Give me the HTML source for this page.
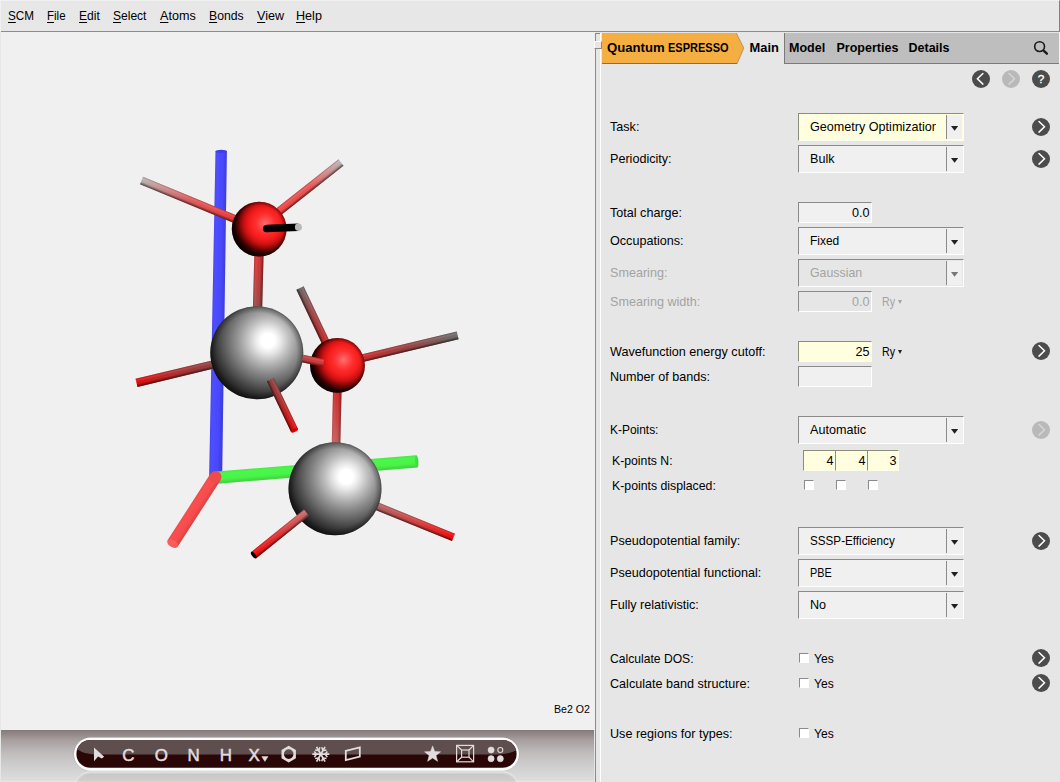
<!DOCTYPE html>
<html><head><meta charset="utf-8"><title>AMSinput</title>
<style>
*{box-sizing:border-box;margin:0;padding:0}
html,body{width:1060px;height:782px;overflow:hidden;background:#e6e6e6}
body{position:relative;font-family:"Liberation Sans",sans-serif;font-size:12.6px;color:#000}
#menubar{position:absolute;left:0;top:0;width:1060px;height:31px;background:#e7e7e7;border-top:1px solid #f1f1f1;border-left:1px solid #f1f1f1;border-right:1px solid #808080}
#menuline{position:absolute;left:1px;top:31px;width:1059px;height:1px;background:#8c8c8c}
#menubar>span{position:absolute;top:7px;margin-left:-1px;line-height:16px;white-space:nowrap}
#menubar u{text-decoration:underline;text-underline-offset:2px}
#view{position:absolute;left:1px;top:32px;width:594px;height:698px;background:#f0f0f0}
#bottom{position:absolute;left:1px;top:730px;width:593px;height:51px;background:linear-gradient(#857979 0,#a89f9f 20%,#c0bcbc 45%,#d0cfcf 72%,#dedede 100%)}
#sashd{position:absolute;left:595px;top:33px;width:1px;height:749px;background:#8a8a8a}
#sashw{position:absolute;left:600px;top:33px;width:1px;height:749px;background:#fff}
.lbl{position:absolute;white-space:nowrap;line-height:16px}
.dis{color:#a3a3a3}
.sunk{position:absolute;background:#f0f0f0;border:1px solid;border-color:#8a8a8a #fff #fff #8a8a8a}
.yel{background:#ffffe0;border-color:#8c8c78 #ffffea #ffffea #8c8c78}
.disbg{background:#e6e6e6}
.combo .t{position:absolute;left:11px;top:5px;line-height:16px;white-space:nowrap;overflow:hidden;width:126px}
.combo .sep{position:absolute;left:147px;top:1px;width:1px;height:24px;background:#8a8a8a}
.combo .btn{position:absolute;left:148px;top:1px;width:15px;height:24px;background:#f0f0f0}
.combo .arr{position:absolute;left:152px;top:12px;width:7.2px;height:4.8px;background:#222;clip-path:polygon(0 0,100% 0,50% 100%)}
.entry .t{position:absolute;right:1.5px;top:2px;line-height:16px;white-space:nowrap}
.circ{position:absolute;width:18px;height:18px}
.cb{position:absolute;width:10px;height:10px;background:#fff;border:1px solid;border-color:#8a8a8a #fff #fff #8a8a8a}
.tri{position:absolute;width:0;height:0;border-left:2px solid transparent;border-right:2px solid transparent;border-top:4px solid #222}
.tab{position:absolute;top:40px;line-height:16px;font-weight:bold;font-size:12.5px;white-space:nowrap}
.sx{display:inline-block;transform-origin:0 50%}
</style></head><body>
<div id="menubar">
<span style="left:8px"><span class="sx" style="transform:scaleX(0.93)"><u>S</u>CM</span></span>
<span style="left:47px"><span class="sx" style="transform:scaleX(0.915)"><u>F</u>ile</span></span>
<span style="left:79px"><span class="sx" style="transform:scaleX(0.96)"><u>E</u>dit</span></span>
<span style="left:113px"><span class="sx" style="transform:scaleX(0.956)"><u>S</u>elect</span></span>
<span style="left:160px"><u>A</u>toms</span>
<span style="left:209px"><span class="sx" style="transform:scaleX(0.97)"><u>B</u>onds</span></span>
<span style="left:257px"><u>V</u>iew</span>
<span style="left:296px"><u>H</u>elp</span>
</div>
<div id="menuline"></div>
<div id="view"></div>
<div id="bottom"></div>
<div id="sashd"></div><div id="sashw"></div>

<svg id="mol" style="position:absolute;left:0;top:32px" width="595" height="698" viewBox="0 32 595 698"><defs><linearGradient id="shA" x1="0" y1="0" x2="0" y2="1"><stop offset="0" stop-color="#000" stop-opacity="0.2"/><stop offset="0.22" stop-color="#fff" stop-opacity="0.12"/><stop offset="0.5" stop-color="#fff" stop-opacity="0"/><stop offset="0.72" stop-color="#000" stop-opacity="0.14"/><stop offset="1" stop-color="#000" stop-opacity="0.6"/></linearGradient><linearGradient id="shB" x1="0" y1="1" x2="0" y2="0"><stop offset="0" stop-color="#000" stop-opacity="0.2"/><stop offset="0.22" stop-color="#fff" stop-opacity="0.12"/><stop offset="0.5" stop-color="#fff" stop-opacity="0"/><stop offset="0.72" stop-color="#000" stop-opacity="0.14"/><stop offset="1" stop-color="#000" stop-opacity="0.6"/></linearGradient><radialGradient id="edge" cx="0.5" cy="0.5" r="0.5"><stop offset="0" stop-color="#000" stop-opacity="0"/><stop offset="0.86" stop-color="#000" stop-opacity="0"/><stop offset="0.96" stop-color="#000" stop-opacity="0.22"/><stop offset="1" stop-color="#000" stop-opacity="0.42"/></radialGradient><radialGradient id="gO" cx="0.61" cy="0.40" r="0.63" fx="0.61" fy="0.40"><stop offset="0" stop-color="#ff7070"/><stop offset="0.12" stop-color="#ff5252"/><stop offset="0.28" stop-color="#ff2e2e"/><stop offset="0.46" stop-color="#f41c1c"/><stop offset="0.6" stop-color="#cc1212"/><stop offset="0.72" stop-color="#8a0808"/><stop offset="0.82" stop-color="#460202"/><stop offset="0.91" stop-color="#1c0000"/><stop offset="1" stop-color="#100000"/></radialGradient><radialGradient id="edgeO" cx="0.5" cy="0.5" r="0.5"><stop offset="0" stop-color="#000" stop-opacity="0"/><stop offset="0.86" stop-color="#000" stop-opacity="0"/><stop offset="1" stop-color="#000" stop-opacity="0.4"/></radialGradient><radialGradient id="gBe" cx="0.62" cy="0.37" r="0.69" fx="0.62" fy="0.37"><stop offset="0" stop-color="#fff"/><stop offset="0.11" stop-color="#fff"/><stop offset="0.2" stop-color="#e8e8e8"/><stop offset="0.34" stop-color="#bcbcbc"/><stop offset="0.5" stop-color="#8e8e8e"/><stop offset="0.66" stop-color="#646464"/><stop offset="0.8" stop-color="#3e3e3e"/><stop offset="0.91" stop-color="#222"/><stop offset="1" stop-color="#141414"/></radialGradient><linearGradient id="g1" x1="0" y1="0" x2="1" y2="0"><stop offset="0" stop-color="#4848ff"/><stop offset="1" stop-color="#4848ff"/></linearGradient><linearGradient id="g2" x1="0" y1="0" x2="1" y2="0"><stop offset="0" stop-color="#ea3434"/><stop offset="0.5" stop-color="#dc5a5a"/><stop offset="1" stop-color="#b8b0b0"/></linearGradient><linearGradient id="g3" x1="0" y1="0" x2="1" y2="0"><stop offset="0" stop-color="#f24040"/><stop offset="0.5" stop-color="#ea5454"/><stop offset="1" stop-color="#bcb2b2"/></linearGradient><linearGradient id="g4" x1="0" y1="0" x2="1" y2="0"><stop offset="0" stop-color="#e03030"/><stop offset="1" stop-color="#9c4848"/></linearGradient><linearGradient id="g5" x1="0" y1="0" x2="1" y2="0"><stop offset="0" stop-color="#000"/><stop offset="1" stop-color="#000"/></linearGradient><linearGradient id="g6" x1="0" y1="0" x2="1" y2="0"><stop offset="0" stop-color="#8c4040"/><stop offset="0.5" stop-color="#b02a2a"/><stop offset="1" stop-color="#e00808"/></linearGradient><linearGradient id="g7" x1="0" y1="0" x2="1" y2="0"><stop offset="0" stop-color="#c02828"/><stop offset="0.5" stop-color="#a04040"/><stop offset="1" stop-color="#6e6464"/></linearGradient><linearGradient id="g8" x1="0" y1="0" x2="1" y2="0"><stop offset="0" stop-color="#c82a2a"/><stop offset="0.5" stop-color="#964040"/><stop offset="1" stop-color="#6a6a6a"/></linearGradient><linearGradient id="g9" x1="0" y1="0" x2="1" y2="0"><stop offset="0" stop-color="#d02828"/><stop offset="1" stop-color="#c86060"/></linearGradient><linearGradient id="g10" x1="0" y1="0" x2="1" y2="0"><stop offset="0" stop-color="#48f548"/><stop offset="1" stop-color="#48f548"/></linearGradient><linearGradient id="g11" x1="0" y1="0" x2="1" y2="0"><stop offset="0" stop-color="#f84c4c"/><stop offset="1" stop-color="#f84c4c"/></linearGradient><linearGradient id="g12" x1="0" y1="0" x2="1" y2="0"><stop offset="0" stop-color="#8c4040"/><stop offset="0.5" stop-color="#b42828"/><stop offset="1" stop-color="#e00a0a"/></linearGradient><linearGradient id="g13" x1="0" y1="0" x2="1" y2="0"><stop offset="0" stop-color="#b84040"/><stop offset="1" stop-color="#de3030"/></linearGradient><linearGradient id="g14" x1="0" y1="0" x2="1" y2="0"><stop offset="0" stop-color="#b06060"/><stop offset="0.5" stop-color="#d04040"/><stop offset="1" stop-color="#ee0808"/></linearGradient><linearGradient id="g15" x1="0" y1="0" x2="1" y2="0"><stop offset="0" stop-color="#c86a6a"/><stop offset="0.5" stop-color="#e03030"/><stop offset="1" stop-color="#f00808"/></linearGradient></defs>
<g transform="translate(221.2 151.0) rotate(90.98)"><polygon points="0,-5.70 326.05,-6.50 326.05,6.50 0,5.70" fill="url(#g1)"/><polygon points="0,-5.70 326.05,-6.50 326.05,6.50 0,5.70" fill="url(#shB)" opacity="0.3"/></g>
<ellipse cx="221.2" cy="151.3" rx="5.7" ry="1.6" fill="#3c3cf0"/>
<g transform="translate(236.0 219.5) rotate(-157.57)"><polygon points="0,-4.00 102.23,-4.00 102.23,4.00 0,4.00" fill="url(#g2)"/><polygon points="0,-4.00 102.23,-4.00 102.23,4.00 0,4.00" fill="url(#shB)" opacity="1"/></g>
<g transform="translate(279.0 211.5) rotate(-38.32)"><polygon points="0,-4.00 79.03,-4.00 79.03,4.00 0,4.00" fill="url(#g3)"/><polygon points="0,-4.00 79.03,-4.00 79.03,4.00 0,4.00" fill="url(#shA)" opacity="1"/></g>
<g transform="translate(259.0 252.0) rotate(91.48)"><polygon points="0,-4.65 58.02,-4.65 58.02,4.65 0,4.65" fill="url(#g4)"/><polygon points="0,-4.65 58.02,-4.65 58.02,4.65 0,4.65" fill="url(#shB)" opacity="0.7"/></g>
<circle cx="259.2" cy="229.1" r="27.4" fill="url(#gO)"/><circle cx="259.2" cy="229.1" r="27.4" fill="url(#edgeO)"/>
<circle cx="266.6" cy="228.6" r="3.7" fill="#000"/>
<g transform="translate(266.6 228.6) rotate(-2.52)"><polygon points="0,-3.75 31.83,-3.75 31.83,3.75 0,3.75" fill="url(#g5)"/><polygon points="0,-3.75 31.83,-3.75 31.83,3.75 0,3.75" fill="url(#shA)" opacity="0.0"/><ellipse cx="31.83" cy="0" rx="3.52" ry="3.75" fill="#b9b9b9"/></g>
<g transform="translate(213.0 364.5) rotate(166.55)"><polygon points="0,-4.20 78.66,-4.20 78.66,4.20 0,4.20" fill="url(#g6)"/><polygon points="0,-4.20 78.66,-4.20 78.66,4.20 0,4.20" fill="url(#shB)" opacity="1"/></g>
<g transform="translate(326.0 343.0) rotate(-115.30)"><polygon points="0,-4.00 60.84,-4.00 60.84,4.00 0,4.00" fill="url(#g7)"/><polygon points="0,-4.00 60.84,-4.00 60.84,4.00 0,4.00" fill="url(#shB)" opacity="1"/></g>
<g transform="translate(361.0 358.5) rotate(-13.44)"><polygon points="0,-3.90 99.42,-3.90 99.42,3.90 0,3.90" fill="url(#g8)"/><polygon points="0,-3.90 99.42,-3.90 99.42,3.90 0,3.90" fill="url(#shA)" opacity="1"/></g>
<g transform="translate(337.3 390.0) rotate(91.33)"><polygon points="0,-4.30 56.02,-4.30 56.02,4.30 0,4.30" fill="url(#g9)"/><polygon points="0,-4.30 56.02,-4.30 56.02,4.30 0,4.30" fill="url(#shB)" opacity="0.55"/></g>
<g transform="translate(217.0 477.6) rotate(-4.64)"><polygon points="0,-6.10 200.46,-6.10 200.46,6.10 0,6.10" fill="url(#g10)"/><polygon points="0,-6.10 200.46,-6.10 200.46,6.10 0,6.10" fill="url(#shA)" opacity="0.25"/></g>
<ellipse cx="416.8" cy="461.4" rx="1.6" ry="6.1" transform="rotate(-4.6 416.8 461.4)" fill="#3ce03c"/>
<g transform="translate(215.6 476.8) rotate(122.77)"><polygon points="0,-6.00 79.44,-6.00 79.44,6.00 0,6.00" fill="url(#g11)"/><polygon points="0,-6.00 79.44,-6.00 79.44,6.00 0,6.00" fill="url(#shB)" opacity="0.22"/><ellipse cx="79.44" cy="0" rx="3.60" ry="6.00" fill="#fa5c5c"/></g>
<circle cx="215.6" cy="476.8" r="5.9" fill="#f04a4a"/>
<circle cx="256.8" cy="352.7" r="46.5" fill="url(#gBe)"/><circle cx="256.8" cy="352.7" r="46.5" fill="url(#edge)"/>
<g transform="translate(270.3 379.7) rotate(64.44)"><polygon points="0,-3.80 56.09,-3.80 56.09,3.80 0,3.80" fill="url(#g12)"/><polygon points="0,-3.80 56.09,-3.80 56.09,3.80 0,3.80" fill="url(#shA)" opacity="1"/><ellipse cx="56.09" cy="0" rx="1.67" ry="3.80" fill="#d80000"/></g>
<circle cx="337.5" cy="365.4" r="27.4" fill="url(#gO)"/><circle cx="337.5" cy="365.4" r="27.4" fill="url(#edgeO)"/>
<g transform="translate(302.5 358.5) rotate(12.09)"><polygon points="0,-3.80 21.48,-3.80 21.48,3.80 0,3.80" fill="url(#g13)"/><polygon points="0,-3.80 21.48,-3.80 21.48,3.80 0,3.80" fill="url(#shA)" opacity="1"/></g>
<g transform="translate(377.0 506.2) rotate(22.19)"><polygon points="0,-4.00 82.62,-4.00 82.62,4.00 0,4.00" fill="url(#g14)"/><polygon points="0,-4.00 82.62,-4.00 82.62,4.00 0,4.00" fill="url(#shA)" opacity="1"/></g>
<circle cx="335" cy="488.7" r="46.5" fill="url(#gBe)"/><circle cx="335" cy="488.7" r="46.5" fill="url(#edge)"/>
<g transform="translate(306.5 512.6) rotate(141.10)"><polygon points="0,-4.00 67.84,-4.00 67.84,4.00 0,4.00" fill="url(#g15)"/><polygon points="0,-4.00 67.84,-4.00 67.84,4.00 0,4.00" fill="url(#shB)" opacity="1"/><ellipse cx="67.84" cy="0" rx="1.76" ry="4.00" fill="#100000"/></g>
</svg>
<div class="lbl" style="left:554px;top:701px;font-size:11px"><span class="sx" style="transform:scaleX(0.965)">Be2 O2</span></div>

<svg id="tb" style="position:absolute;left:1px;top:730px" width="594" height="52" viewBox="1 730 594 52">
<defs>
<linearGradient id="refl" x1="0" y1="0" x2="0" y2="1"><stop offset="0" stop-color="#fff" stop-opacity="0.32"/><stop offset="0.35" stop-color="#fff" stop-opacity="0.16"/><stop offset="1" stop-color="#fff" stop-opacity="0"/></linearGradient>
<clipPath id="pillclip"><rect x="76.4" y="740" width="440.2" height="27.8" rx="13.9"/></clipPath>
</defs>
<rect x="75.2" y="772.2" width="442.6" height="31" rx="15.5" fill="#2a0707" fill-opacity="0.07" stroke="url(#refl)" stroke-width="2.4"/>
<rect x="73.5" y="737" width="446" height="34.2" rx="17.1" fill="#000" fill-opacity="0.13"/>
<rect x="74" y="737.4" width="445" height="33.4" rx="16.7" fill="#fff"/>
<rect x="76.4" y="740" width="440.2" height="27.8" rx="13.9" fill="#2a0707"/>
<g clip-path="url(#pillclip)"><path d="M74 739 H519 V748 C515 752.4 505 754.5 495 754.5 H98 C88 754.5 80 752.4 76 748 Z" fill="#5f4e4e"/></g>
<g fill="#e2dddd" stroke="#e2dddd" stroke-width="0.5" font-family="Liberation Sans,sans-serif" font-size="16.9" text-anchor="middle">
<path d="M94 747.5 L104.2 756.7 L101.7 758.5 L98.1 756.5 L94 761.3 Z" stroke="none"/>
<text x="128.3" y="761">C</text>
<text x="161.2" y="761">O</text>
<text x="193.5" y="761">N</text>
<text x="225.8" y="761">H</text>
<text x="254.2" y="761">X</text>
<path d="M261.8 756.6 H268 L264.9 761.4 Z"/>
<path d="M424.6 751.8 L430.5 751.6 L432.6 745.9 L434.7 751.6 L440.6 751.8 L436 755.5 L437.6 761.3 L432.6 758 L427.6 761.3 L429.2 755.5 Z"/>
<circle cx="491.1" cy="750" r="3.1"/><circle cx="491.1" cy="758.7" r="3.1"/><circle cx="500.3" cy="758.7" r="3.1"/>
</g>
<g fill="none" stroke="#e2dddd">
<path d="M288.7 745.8 L295.9 750 V758.3 L288.7 762.4 L281.5 758.3 V750 Z M293.5 754.1 A4.8 4.8 0 1 0 283.9 754.1 A4.8 4.8 0 1 0 293.5 754.1 Z" fill="#e2dddd" fill-rule="evenodd" stroke="none"/>
<g stroke-linecap="butt"><path d="M320.8 754.2 L329.30 754.20 M320.8 754.2 L325.05 761.56 M320.8 754.2 L316.55 761.56 M320.8 754.2 L312.30 754.20 M320.8 754.2 L316.55 746.84 M320.8 754.2 L325.05 746.84" stroke-width="1.7"/><path d="M325.05 754.20 L327.36 751.44 M325.05 754.20 L327.36 756.96 M322.93 757.88 L326.47 758.51 M322.93 757.88 L321.69 761.26 M318.68 757.88 L319.91 761.26 M318.68 757.88 L315.13 758.51 M316.55 754.20 L314.24 756.96 M316.55 754.20 L314.24 751.44 M318.68 750.52 L315.13 749.89 M318.68 750.52 L319.91 747.14 M322.93 750.52 L321.69 747.14 M322.93 750.52 L326.47 749.89" stroke-width="1.5"/></g>
<path d="M345.8 750.8 L359.8 747.4 V756.6 L345.8 760.2 Z" stroke-width="1.8"/>
<g stroke-width="1.2"><rect x="456.6" y="745.4" width="17" height="16.4"/><rect x="461.6" y="750" width="7.4" height="7.2"/><path d="M456.6 745.4 L461.6 750 M473.6 745.4 L469 750 M456.6 761.8 L461.6 757.2 M473.6 761.8 L469 757.2"/></g>
<circle cx="500.3" cy="750" r="2.5" stroke-width="1.1"/>
</g>
</svg>

<div style="position:absolute;left:596px;top:33px;width:4px;height:749px;background:#e6e6e6"></div>
<div style="position:absolute;left:595px;top:33px;width:5px;height:1px;background:#8a8a8a"></div>
<div style="position:absolute;left:594px;top:41px;width:8px;height:8px;background:#e6e6e6;border:1px solid;border-color:#fff #8a8a8a #8a8a8a #fff"></div>
<div style="position:absolute;left:784px;top:33px;width:275px;height:30px;background:#bebebe;border-left:1px solid #7a7a7a"></div>
<div style="position:absolute;left:1059px;top:32px;width:1px;height:32px;background:#f4f4f4"></div>
<div style="position:absolute;left:784px;top:63px;width:275px;height:1px;background:#7a7a7a"></div>
<svg style="position:absolute;left:601px;top:32px" width="150" height="33" viewBox="0 0 150 33"><path d="M1 1 H135.3 L142.9 16 L136.2 31.5 H1 Z" fill="#f5ae42"/><path d="M135.3 1 L142.9 16 L136.2 31.5" stroke="#6a5a40" stroke-opacity="0.55" stroke-width="0.8" fill="none"/><path d="M1 31.5 H136.2" stroke="#80705a" stroke-width="1" fill="none"/></svg>
<div class="tab" style="left:607.2px"><span class="sx" style="transform:scaleX(1.05)">Quantum</span> <span class="sx" style="transform:scaleX(0.88);position:absolute;left:60.8px;top:0">ESPRESSO</span></div>
<div class="tab" style="left:749.6px;font-size:12.9px">Main</div>
<div class="tab" style="left:789px">Model</div>
<div class="tab" style="left:836.5px">Properties</div>
<div class="tab" style="left:908.5px">Details</div>
<svg style="position:absolute;left:1032px;top:39px" width="18" height="18" viewBox="0 0 18 18"><circle cx="7.6" cy="7.6" r="4.9" fill="none" stroke="#1a1a1a" stroke-width="1.6"/><path d="M11.1 11.1 L12.6 12.5" stroke="#1a1a1a" stroke-width="1.6"/><path d="M12.4 12.3 L14.9 14.7" stroke="#1a1a1a" stroke-width="2.4" stroke-linecap="round"/></svg>
<svg class="circ" style="left:972px;top:70px" viewBox="0 0 18 18"><circle cx="9" cy="9" r="9" fill="#4c4c4c"/><path d="M10.9 3.5 L5.4 8.8 L10.9 14.1" fill="none" stroke="#fff" stroke-width="1.5" stroke-linecap="round" stroke-linejoin="miter"/></svg>
<svg class="circ" style="left:1002px;top:70px" viewBox="0 0 18 18"><circle cx="9" cy="9" r="9" fill="#b9b9b9"/><path d="M7 3.5 L12.5 8.8 L7 14.1" fill="none" stroke="#d6d6d6" stroke-width="1.5" stroke-linecap="round" stroke-linejoin="miter"/></svg>
<svg class="circ" style="left:1032px;top:70px" viewBox="0 0 18 18"><circle cx="9" cy="9" r="9" fill="#4c4c4c"/><text x="9" y="13.3" text-anchor="middle" font-family="Liberation Sans,sans-serif" font-size="11.8" fill="#fff" stroke="#fff" stroke-width="0.35">?</text></svg>

<div class="lbl" style="left:610px;top:119px">Task:</div>
<div class="sunk combo yel" style="left:798px;top:113px;width:166px;height:28px"><div class="t">Geometry Optimization</div><div class="sep"></div><div class="btn"></div><div class="arr" style="background:#222"></div></div>
<svg class="circ" style="left:1032px;top:118px" viewBox="0 0 18 18"><circle cx="9" cy="9" r="9" fill="#4c4c4c"/><path d="M7 3.5 L12.5 8.8 L7 14.1" fill="none" stroke="#fff" stroke-width="1.5" stroke-linecap="round" stroke-linejoin="miter"/></svg>
<div class="lbl" style="left:610px;top:151px">Periodicity:</div>
<div class="sunk combo " style="left:798px;top:145px;width:166px;height:28px"><div class="t">Bulk</div><div class="sep"></div><div class="btn"></div><div class="arr" style="background:#222"></div></div>
<svg class="circ" style="left:1032px;top:150px" viewBox="0 0 18 18"><circle cx="9" cy="9" r="9" fill="#4c4c4c"/><path d="M7 3.5 L12.5 8.8 L7 14.1" fill="none" stroke="#fff" stroke-width="1.5" stroke-linecap="round" stroke-linejoin="miter"/></svg>
<div class="lbl" style="left:610px;top:205px">Total charge:</div>
<div class="sunk entry " style="left:798px;top:202px;width:74px;height:21px"><div class="t">0.0</div></div>
<div class="lbl" style="left:610px;top:233px">Occupations:</div>
<div class="sunk combo " style="left:798px;top:227px;width:166px;height:28px"><div class="t"><span class="sx" style="transform:scaleX(0.95)">Fixed</span></div><div class="sep"></div><div class="btn"></div><div class="arr" style="background:#222"></div></div>
<div class="lbl dis" style="left:610px;top:265px">Smearing:</div>
<div class="sunk combo disbg" style="left:798px;top:259px;width:166px;height:28px"><div class="t dis"><span class="sx" style="transform:scaleX(0.98)">Gaussian</span></div><div class="sep"></div><div class="btn"></div><div class="arr" style="background:#777"></div></div>
<div class="lbl dis" style="left:610px;top:294px">Smearing width:</div>
<div class="sunk entry disbg" style="left:798px;top:291px;width:74px;height:21px"><div class="t dis">0.0</div></div>
<div class="lbl dis" style="left:882px;top:294px"><span class="sx" style="transform:scaleX(0.85)">Ry</span></div><div class="tri" style="left:898px;top:300px;border-top-color:#a3a3a3"></div>
<div class="lbl" style="left:610px;top:344px">Wavefunction energy cutoff:</div>
<div class="sunk entry yel" style="left:798px;top:341px;width:74px;height:21px"><div class="t">25</div></div>
<svg class="circ" style="left:1032px;top:342px" viewBox="0 0 18 18"><circle cx="9" cy="9" r="9" fill="#4c4c4c"/><path d="M7 3.5 L12.5 8.8 L7 14.1" fill="none" stroke="#fff" stroke-width="1.5" stroke-linecap="round" stroke-linejoin="miter"/></svg>
<div class="lbl" style="left:882px;top:344px"><span class="sx" style="transform:scaleX(0.85)">Ry</span></div><div class="tri" style="left:898px;top:350px"></div>
<div class="lbl" style="left:610px;top:369px">Number of bands:</div>
<div class="sunk entry " style="left:798px;top:366px;width:74px;height:21px"><div class="t"></div></div>
<div class="lbl" style="left:610px;top:422px"><span class="sx" style="transform:scaleX(0.948)">K-Points:</span></div>
<div class="sunk combo " style="left:798px;top:416px;width:166px;height:28px"><div class="t">Automatic</div><div class="sep"></div><div class="btn"></div><div class="arr" style="background:#222"></div></div>
<svg class="circ" style="left:1032px;top:421px" viewBox="0 0 18 18"><circle cx="9" cy="9" r="9" fill="#b9b9b9"/><path d="M7 3.5 L12.5 8.8 L7 14.1" fill="none" stroke="#d6d6d6" stroke-width="1.5" stroke-linecap="round" stroke-linejoin="miter"/></svg>
<div class="lbl" style="left:612px;top:453px"><span class="sx" style="transform:scaleX(0.972)">K-points N:</span></div>
<div class="sunk entry yel" style="left:803px;top:450px;width:33px;height:21px"><div class="t">4</div></div>
<div class="sunk entry yel" style="left:835px;top:450px;width:33px;height:21px"><div class="t">4</div></div>
<div class="sunk entry yel" style="left:867px;top:450px;width:32px;height:21px"><div class="t">3</div></div>
<div class="lbl" style="left:612px;top:478px"><span class="sx" style="transform:scaleX(0.976)">K-points displaced:</span></div>
<div class="cb" style="left:804px;top:480px"></div>
<div class="cb" style="left:836px;top:480px"></div>
<div class="cb" style="left:868px;top:480px"></div>
<div class="lbl" style="left:610px;top:533px">Pseudopotential family:</div>
<div class="sunk combo " style="left:798px;top:527px;width:166px;height:28px"><div class="t"><span class="sx" style="transform:scaleX(0.927)">SSSP-Efficiency</span></div><div class="sep"></div><div class="btn"></div><div class="arr" style="background:#222"></div></div>
<svg class="circ" style="left:1032px;top:532px" viewBox="0 0 18 18"><circle cx="9" cy="9" r="9" fill="#4c4c4c"/><path d="M7 3.5 L12.5 8.8 L7 14.1" fill="none" stroke="#fff" stroke-width="1.5" stroke-linecap="round" stroke-linejoin="miter"/></svg>
<div class="lbl" style="left:610px;top:565px">Pseudopotential functional:</div>
<div class="sunk combo " style="left:798px;top:559px;width:166px;height:28px"><div class="t"><span class="sx" style="transform:scaleX(0.86)">PBE</span></div><div class="sep"></div><div class="btn"></div><div class="arr" style="background:#222"></div></div>
<div class="lbl" style="left:610px;top:597px">Fully relativistic:</div>
<div class="sunk combo " style="left:798px;top:591px;width:166px;height:28px"><div class="t">No</div><div class="sep"></div><div class="btn"></div><div class="arr" style="background:#222"></div></div>
<div class="lbl" style="left:610px;top:651px"><span class="sx" style="transform:scaleX(0.963)">Calculate DOS:</span></div>
<div class="cb" style="left:799px;top:653px"></div>
<div class="lbl" style="left:814px;top:651px"><span class="sx" style="transform:scaleX(0.96)">Yes</span></div>
<svg class="circ" style="left:1032px;top:649px" viewBox="0 0 18 18"><circle cx="9" cy="9" r="9" fill="#4c4c4c"/><path d="M7 3.5 L12.5 8.8 L7 14.1" fill="none" stroke="#fff" stroke-width="1.5" stroke-linecap="round" stroke-linejoin="miter"/></svg>
<div class="lbl" style="left:610px;top:676px">Calculate band structure:</div>
<div class="cb" style="left:799px;top:678px"></div>
<div class="lbl" style="left:814px;top:676px"><span class="sx" style="transform:scaleX(0.96)">Yes</span></div>
<svg class="circ" style="left:1032px;top:674px" viewBox="0 0 18 18"><circle cx="9" cy="9" r="9" fill="#4c4c4c"/><path d="M7 3.5 L12.5 8.8 L7 14.1" fill="none" stroke="#fff" stroke-width="1.5" stroke-linecap="round" stroke-linejoin="miter"/></svg>
<div class="lbl" style="left:610px;top:726px">Use regions for types:</div>
<div class="cb" style="left:799px;top:728px"></div>
<div class="lbl" style="left:814px;top:726px"><span class="sx" style="transform:scaleX(0.96)">Yes</span></div>
</body></html>
